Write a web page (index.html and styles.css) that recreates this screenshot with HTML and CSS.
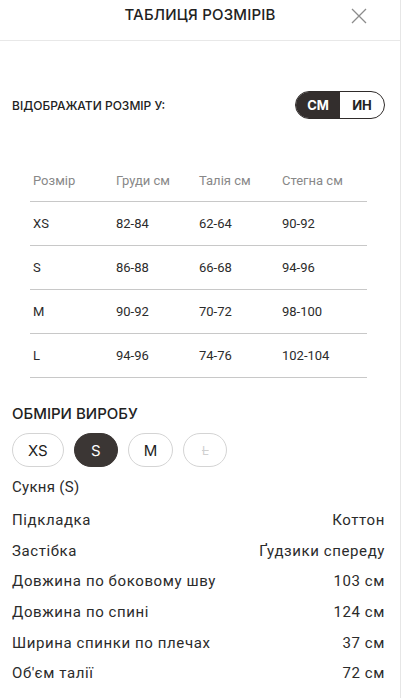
FILE: index.html
```html
<!DOCTYPE html>
<html lang="uk">
<head>
    <meta charset="UTF-8">
    <meta name="viewport" content="width=device-width, initial-scale=1.0">
    <title>Таблиця розмірів</title>
    <link rel="stylesheet" href="styles.css">
</head>
<body>
    <div class="sheet">
        <div class="sheet-header">
            <h2>Таблиця розмірів</h2>
            <button class="close-btn" aria-label="Закрити">
                <svg width="16" height="16" viewBox="0 0 16 16">
                    <path d="M1 1 L15 15 M15 1 L1 15" stroke="#8c8c8c" stroke-width="1.3" fill="none"/>
                </svg>
            </button>
        </div>

        <div class="units-row">
            <span class="units-label">Відображати розмір у:</span>
            <div class="units-toggle">
                <span class="unit active">см</span>
                <span class="unit">ин</span>
            </div>
        </div>

        <table class="size-table">
            <thead>
                <tr>
                    <th>Розмір</th>
                    <th>Груди см</th>
                    <th>Талія см</th>
                    <th>Стегна см</th>
                </tr>
            </thead>
            <tbody>
                <tr><td>XS</td><td>82-84</td><td>62-64</td><td>90-92</td></tr>
                <tr><td>S</td><td>86-88</td><td>66-68</td><td>94-96</td></tr>
                <tr><td>M</td><td>90-92</td><td>70-72</td><td>98-100</td></tr>
                <tr><td>L</td><td>94-96</td><td>74-76</td><td>102-104</td></tr>
            </tbody>
        </table>

        <h3 class="section-title">Обміри виробу</h3>
        <div class="chips">
            <span class="chip">XS</span>
            <span class="chip selected">S</span>
            <span class="chip">M</span>
            <span class="chip disabled">L</span>
        </div>

        <p class="item-name">Сукня (S)</p>
        <ul class="measures">
            <li><span>Підкладка</span><span>Коттон</span></li>
            <li><span>Застібка</span><span>Ґудзики спереду</span></li>
            <li><span>Довжина по боковому шву</span><span>103 см</span></li>
            <li><span>Довжина по спині</span><span>124 см</span></li>
            <li><span>Ширина спинки по плечах</span><span>37 см</span></li>
            <li><span>Об'єм талії</span><span>72 см</span></li>
        </ul>
    </div>
</body>
</html>
```

FILE: styles.css
```css
body {
    margin: 0;
    background: #fff;
    font-family: Roboto, "Noto Sans", sans-serif;
    color: #2b2b2b;
}

.sheet {
    width: 400px;
    min-height: 698px;
    border-right: 1px solid #e6e6e6;
    box-sizing: content-box;
}

.sheet-header {
    height: 40px;
    border-bottom: 1px solid #e8e8e8;
    display: flex;
    align-items: center;
    justify-content: center;
    position: relative;
}

.sheet-header h2 {
    margin: 0;
    font-family: Inter, "Liberation Sans", sans-serif;
    font-size: 15px;
    font-weight: 500;
    text-transform: uppercase;
    letter-spacing: 0.2px;
    color: #222;
    margin-top: -11px;
}

.close-btn {
    position: absolute;
    right: 32px;
    top: 7px;
    width: 18px;
    height: 18px;
    padding: 0;
    border: none;
    background: none;
    display: flex;
    align-items: center;
    justify-content: center;
}

.units-row {
    display: flex;
    align-items: center;
    justify-content: space-between;
    padding: 50px 15px 0 12px;
}

.units-label {
    font-family: Inter, "Liberation Sans", sans-serif;
    font-size: 12px;
    font-weight: 500;
    text-transform: uppercase;
    color: #222;
}

.units-toggle {
    display: flex;
    border: 1px solid #2f2b2a;
    border-radius: 14px;
    overflow: hidden;
    height: 26px;
}

.unit {
    width: 44px;
    display: flex;
    align-items: center;
    justify-content: center;
    font-family: Inter, "Liberation Sans", sans-serif;
    font-size: 13px;
    font-weight: 700;
    text-transform: uppercase;
    color: #222;
}

.unit.active {
    background: #332e2d;
    color: #fff;
}

.size-table {
    margin: 40px 0 0 30px;
    width: 337px;
    border-collapse: collapse;
    font-size: 13px;
    table-layout: fixed;
}

.size-table th,
.size-table td {
    text-align: left;
    padding: 0 0 0 3px;
    border-bottom: 1px solid #c8c8c8;
}

.size-table th:nth-child(1),
.size-table th:nth-child(2),
.size-table th:nth-child(3) {
    width: 80px;
}

.size-table th {
    height: 42px;
    font-weight: 400;
    color: #888;
    vertical-align: middle;
}

.size-table td {
    height: 43px;
    color: #2b2b2b;
}

.section-title {
    margin: 26px 0 0 12px;
    font-family: Inter, "Liberation Sans", sans-serif;
    font-size: 15px;
    font-weight: 500;
    text-transform: uppercase;
    color: #222;
}

.chips {
    display: flex;
    gap: 10px;
    padding: 10px 12px 0;
}

.chip {
    min-width: 44px;
    height: 34px;
    box-sizing: border-box;
    padding: 0 15px;
    border: 1px solid #d4d4d4;
    border-radius: 17px;
    display: flex;
    align-items: center;
    justify-content: center;
    font-family: Inter, "Liberation Sans", sans-serif;
    font-size: 15px;
    color: #222;
}

.chip.selected {
    background: #3b3634;
    border-color: #3b3634;
    color: #fff;
}

.chip.disabled {
    color: #d0d0d0;
    text-decoration: line-through;
    font-size: 12px;
}

.item-name {
    margin: 11px 0 0 12px;
    font-size: 15px;
    letter-spacing: 0.3px;
}

.measures {
    list-style: none;
    margin: 9px 0 0;
    padding: 0 15px 0 12px;
    font-size: 15px;
}

.measures li {
    display: flex;
    justify-content: space-between;
    height: 30.6px;
    align-items: center;
    letter-spacing: 0.6px;
}
```
